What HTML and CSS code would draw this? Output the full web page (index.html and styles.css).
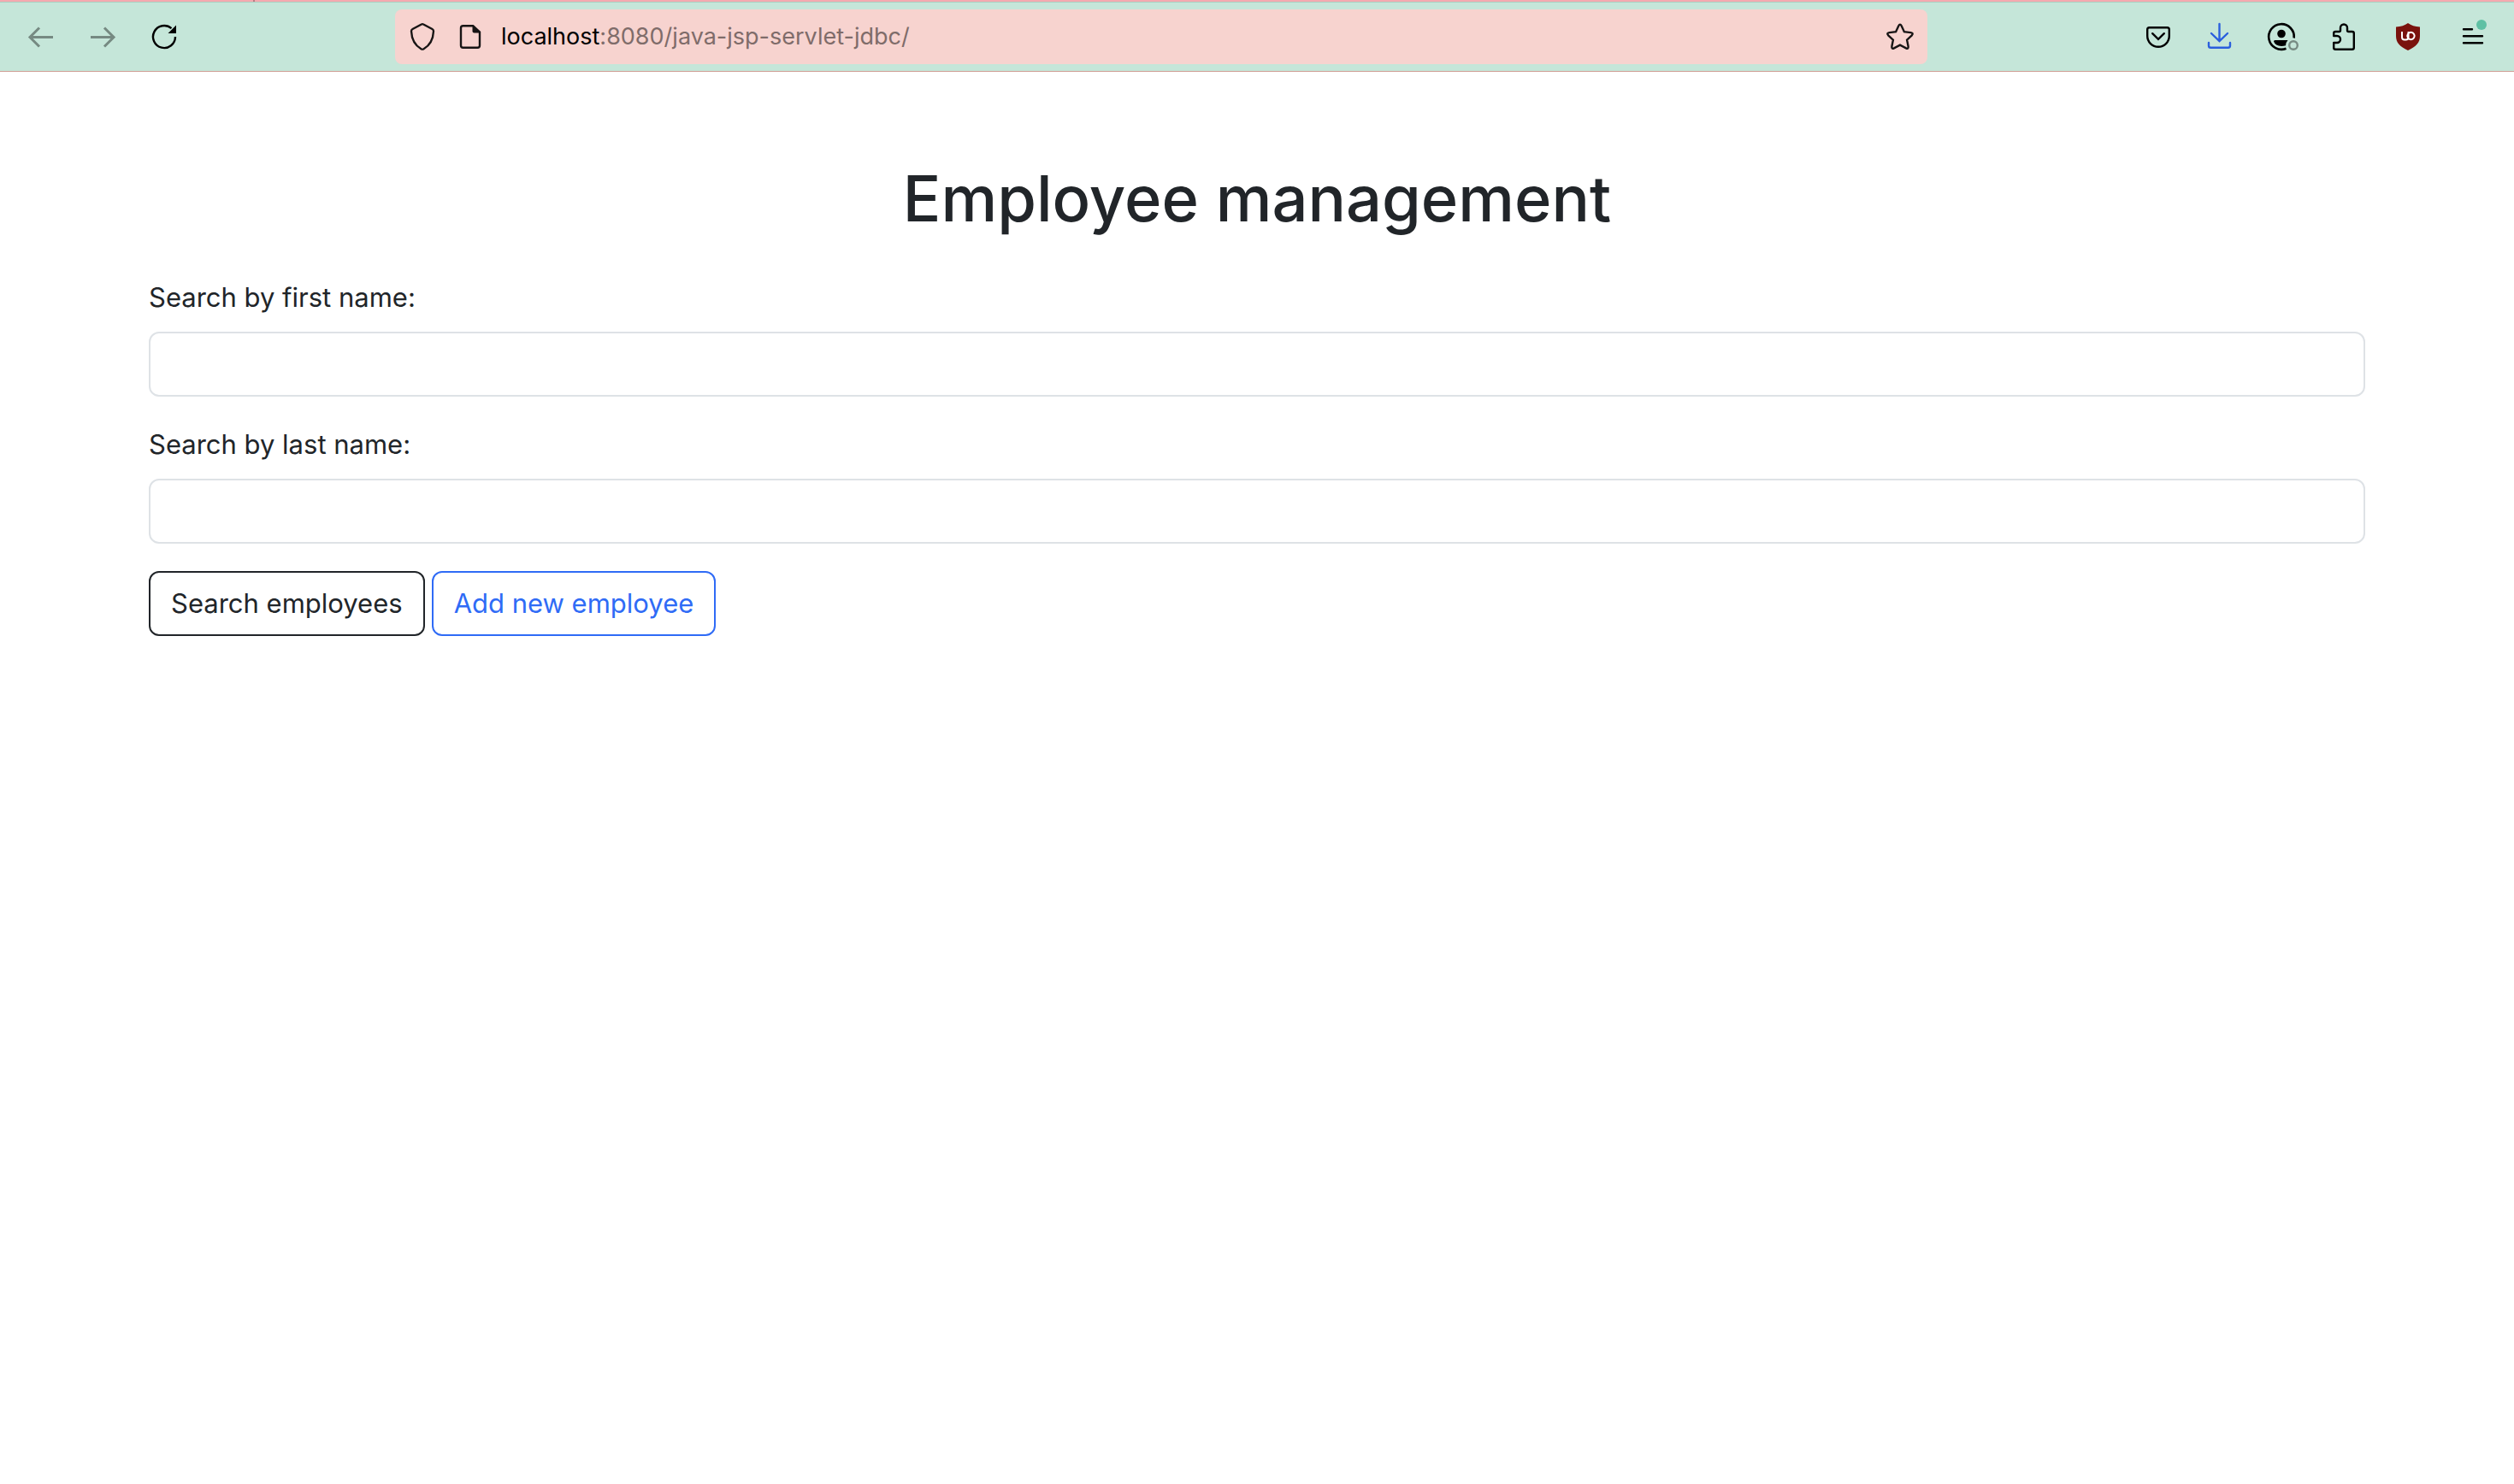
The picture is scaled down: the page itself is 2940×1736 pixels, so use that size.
FILE: index.html
```html
<!DOCTYPE html>
<html lang="en">
<head>
<meta charset="utf-8">
<meta name="viewport" content="width=device-width, initial-scale=1">
<title>Employee management</title>
<link rel="stylesheet" href="styles.css">
</head>
<body>
<header class="browser">
  <div class="tab-strip"><span class="tab-separator"></span></div>
  <div class="toolbar">
    <button class="tool" type="button" aria-label="Back" disabled>
      <svg class="icon" viewBox="0 0 48 48"><path d="M38 24.5H12M22 13.5l-11 11 11 11" stroke-width="3"/></svg>
    </button>
    <button class="tool" type="button" aria-label="Forward" disabled>
      <svg class="icon" viewBox="0 0 48 48"><path d="M10 24.5h26M26 13.5l11 11-11 11" stroke-width="3"/></svg>
    </button>
    <button class="tool" type="button" aria-label="Reload">
      <svg class="icon" viewBox="0 0 48 48"><path d="M37 24A13 13 0 1 1 32.5 14.2" stroke-width="2.4"/><path class="solid" d="M38 10.5V20H28.5z"/></svg>
    </button>
    <div class="spacer"></div>
    <div class="address">
      <button class="address-tool" type="button" aria-label="Tracking protection">
        <svg class="icon" viewBox="0 0 48 48"><path d="M22.800 9.500Q24 8.700 25.200 9.500L35.500 15Q37 15.800 37 17.500C36.500 28 32 34.500 25.500 38.200Q24 39 22.500 38.200C16 34.500 11.500 28 11 17.500Q11 15.800 12.500 15Z" stroke-width="2.4"/></svg>
      </button>
      <button class="address-tool" type="button" aria-label="Site information">
        <svg class="icon" viewBox="0 0 48 48"><path d="M27 11.200H15.500a2.500 2.500 0 0 0-2.500 2.500v20.600a2.500 2.500 0 0 0 2.500 2.500h17a2.500 2.500 0 0 0 2.500-2.500V18.500z" stroke-width="2.4"/><path class="solid" d="M26.500 10.500V17.500a2 2 0 0 0 2 2h7.500V18.500l-8-8z"/></svg>
      </button>
      <div class="url" role="textbox" aria-label="Address" contenteditable="true" spellcheck="false"><span class="host">localhost</span>:8080/java-jsp-servlet-jdbc/</div>
      <button class="address-tool" type="button" aria-label="Bookmark this page">
        <svg class="icon" viewBox="0 0 48 48"><path d="M22.300 11.200q1.700-3.200 3.400 0l3.200 7 7.700.9q3.500.6 1.200 3.200l-5.700 5.400 1.500 7.600q.4 3.400-2.600 2L24 33.700l-7 3.600q-3 1.400-2.600-2l1.500-7.600-5.700-5.400q-2.300-2.600 1.200-3.200l7.700-.9z" stroke-width="2.4"/></svg>
      </button>
    </div>
    <div class="spacer"></div>
    <button class="tool" type="button" aria-label="Save to Pocket">
      <svg class="icon" viewBox="0 0 48 48"><path d="M13.500 13.200h21a2.300 2.300 0 0 1 2.300 2.300V23a12.800 12.800 0 0 1-25.600 0v-7.500a2.300 2.300 0 0 1 2.300-2.300z" stroke-width="2.4"/><path d="M17.200 20.200l6.800 6.600 6.800-6.600" stroke-width="2.400" stroke-linecap="round"/></svg>
    </button>
    <button class="tool tool-downloads" type="button" aria-label="Downloads">
      <svg class="icon" viewBox="0 0 48 48"><path d="M23.500 9v19M14 20l9.500 9 9.500-9M11 31v3.500a2.300 2.300 0 0 0 2.300 2.300h20.400a2.300 2.300 0 0 0 2.300-2.300V31" stroke-width="2.4" stroke-linecap="round"/></svg>
    </button>
    <button class="tool" type="button" aria-label="Account">
      <svg class="icon" viewBox="0 0 48 48"><path d="M38.700 25.500A14.800 14.800 0 1 0 29.500 37.700" stroke-width="2.6"/><circle class="solid" cx="24" cy="20.500" r="4.800"/><path class="solid" d="M16.500 28H31.500a9 9 0 0 0-2.500 6.300Q26.500 35 24 35 17 34.800 15 29.500 15 28 16.500 28z"/><circle class="status-ring" cx="38" cy="34" r="4.800" stroke-width="2.4"/></svg>
    </button>
    <button class="tool" type="button" aria-label="Extensions">
      <svg class="icon" viewBox="0 0 48 48"><path d="M13.200 23V20a2 2 0 0 1 2-2h4.300a1.500 1.500 0 0 0 1.500-1.500v-3a4 4 0 0 1 8 0v3a1.500 1.500 0 0 0 1.500 1.500h4.300a2 2 0 0 1 2 2v16.800a2 2 0 0 1-2 2H15.200a2 2 0 0 1-2-2V31h3.800a4 4 0 0 0 0-8z" stroke-width="2.400" stroke-linejoin="round"/></svg>
    </button>
    <button class="tool tool-blocker" type="button" aria-label="uBlock Origin">
      <svg class="icon" viewBox="0 0 48 48"><path class="shield" d="M24 8q5.500 4 14 4.500V23c0 8-4.500 12.500-14 17-9.500-4.500-14-9-14-17V12.500Q18.500 12 24 8z"/><path class="shield-mark" d="M17 18v6.500a3 3 0 0 0 3 3h1.500a3 3 0 0 0 3-3V18M27.500 18.800a4.200 4.200 0 1 1-.1 0z" stroke-width="2"/></svg>
    </button>
    <button class="tool" type="button" aria-label="Menu">
      <svg class="icon" viewBox="0 0 48 48"><path d="M13 15.300h10M13 23.300h22M13 31.300h22" stroke-width="2.400" stroke-linecap="round"/><circle class="badge" cx="34" cy="10" r="6"/></svg>
    </button>
  </div>
</header>
<main class="container">
  <h1 class="title">Employee management</h1>
  <form class="search">
    <div class="field">
      <label for="first-name">Search by first name:</label>
      <input id="first-name" name="firstName" type="text">
    </div>
    <div class="field">
      <label for="last-name">Search by last name:</label>
      <input id="last-name" name="lastName" type="text">
    </div>
    <div class="actions">
      <button class="btn btn-dark" type="submit">Search employees</button>
      <a class="btn btn-primary" href="#new">Add new employee</a>
    </div>
  </form>
</main>
</body>
</html>
```
FILE: styles.css
```css
*, *::before, *::after {
  box-sizing: border-box;
}

body {
  margin: 0;
  background: #fff;
  color: #212529;
  font-family: Inter, "Liberation Sans", sans-serif;
  font-size: 31px;
  line-height: 48px;
}

button, input {
  font: inherit;
  color: inherit;
}

/* Browser chrome */
.browser {
  background: #c5e6d9;
  border-bottom: 1px solid #cf9f95;
}

.tab-strip {
  display: flex;
  height: 3px;
  padding-left: 296px;
  background: #f5a9b0;
  border-bottom: 1px solid #a9cfc1;
}

.tab-separator {
  width: 2px;
  background: #b77f84;
}

.toolbar {
  display: flex;
  align-items: center;
  height: 80px;
  padding: 0 12px;
}

.tool, .address-tool {
  display: flex;
  flex: none;
  align-items: center;
  justify-content: center;
  width: 72px;
  height: 64px;
  padding: 0;
  border: 0;
  background: none;
  color: #000;
}

.tool:disabled {
  color: #768a82;
}

.tool-downloads {
  color: #2a5fdd;
}

.tool-blocker {
  width: 80px;
}

.address-tool {
  width: 56px;
  color: #181515;
}

.icon {
  width: 48px;
  height: 48px;
  fill: none;
  stroke: currentColor;
}

.icon .solid {
  fill: currentColor;
  stroke: none;
}

.icon .status-ring {
  stroke: #768a82;
}

.icon .shield {
  fill: #7a120d;
  stroke: none;
}

.icon .shield-mark {
  stroke: #fff;
}

.icon .badge {
  fill: #5fc0a4;
  stroke: none;
}

.spacer {
  flex: 234;
}

.address {
  display: flex;
  flex: 1784;
  align-items: center;
  height: 64px;
  padding: 0 4px;
  border-radius: 8px;
  background: #f7d3cf;
}

.url {
  flex: 1;
  padding-left: 8px;
  color: #7f6c6a;
  font-size: 27px;
  line-height: 50px;
  white-space: nowrap;
}

.host {
  color: #000;
}

/* Page */
.container {
  max-width: 2640px;
  margin: 0 auto;
  padding: 100px 24px;
}

.title {
  margin: 0 0 44px;
  font-size: 74px;
  font-weight: 500;
  line-height: 96px;
  text-align: center;
}

.search {
  display: flex;
  flex-direction: column;
  gap: 32px;
}

.field {
  display: flex;
  flex-direction: column;
  gap: 16px;
}

.field input {
  width: 100%;
  padding: 12px 24px;
  border: 2px solid #dee2e6;
  border-radius: 12px;
  background: #fff;
}

.actions {
  display: flex;
  gap: 8px;
}

.btn {
  padding: 12px 24px;
  border: 2px solid currentColor;
  border-radius: 12px;
  background: none;
  text-decoration: none;
}

.btn-dark {
  color: #212529;
}

.btn-primary {
  color: #2f6bf6;
}
```
